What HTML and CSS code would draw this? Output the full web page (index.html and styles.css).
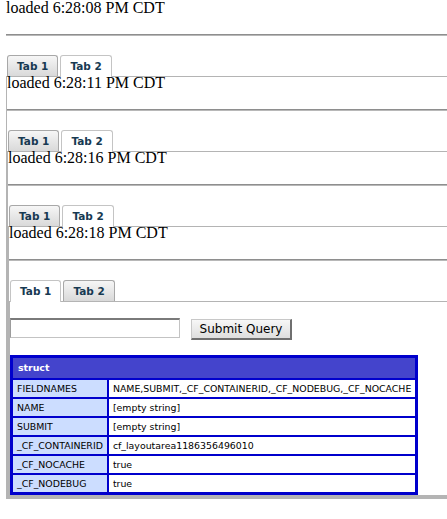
FILE: index.html
```html
<!DOCTYPE html>
<html>
<head>
<meta charset="utf-8">
<link rel="stylesheet" href="styles.css">
</head>
<body>
<div class="level top">
  <div class="loaded">loaded 6:28:08 PM CDT</div>
  <hr>
  <div class="tabs"><span class="tab">Tab 1</span><span class="tab active">Tab 2</span></div>
  <div class="panel">
    <div class="loaded">loaded 6:28:11 PM CDT</div>
    <hr>
    <div class="tabs"><span class="tab">Tab 1</span><span class="tab active">Tab 2</span></div>
    <div class="panel">
      <div class="loaded">loaded 6:28:16 PM CDT</div>
      <hr>
      <div class="tabs"><span class="tab">Tab 1</span><span class="tab active">Tab 2</span></div>
      <div class="panel">
        <div class="loaded">loaded 6:28:18 PM CDT</div>
        <hr>
        <div class="tabs"><span class="tab active">Tab 1</span><span class="tab">Tab 2</span></div>
        <div class="panel inner">
          <form class="form">
            <input class="field" type="text" name="name">
            <button class="submit" type="button">Submit Query</button>
          </form>
          <table class="cfdump">
            <tr><th class="head" colspan="2">struct</th></tr>
            <tr><td class="key">FIELDNAMES</td><td class="val">NAME,SUBMIT,_CF_CONTAINERID,_CF_NODEBUG,_CF_NOCACHE</td></tr>
            <tr><td class="key">NAME</td><td class="val">[empty string]</td></tr>
            <tr><td class="key">SUBMIT</td><td class="val">[empty string]</td></tr>
            <tr><td class="key">_CF_CONTAINERID</td><td class="val">cf_layoutarea1186356496010</td></tr>
            <tr><td class="key">_CF_NOCACHE</td><td class="val">true</td></tr>
            <tr><td class="key">_CF_NODEBUG</td><td class="val">true</td></tr>
          </table>
        </div>
      </div>
    </div>
  </div>
</div>
</body>
</html>
```

FILE: styles.css
```css
html, body {
  background: #fff;
}
body {
  margin: 0 0 0 6px;
  font-family: "Liberation Serif", "Times New Roman", serif;
  font-size: 16px;
  line-height: 18px;
  color: #000;
  overflow: hidden;
}
.loaded {
  height: 18px;
  margin-top: -3px;
  white-space: nowrap;
}
.top > .loaded {
  margin-top: -1px;
}
hr {
  margin: 17px 0 19px 0;
  height: 0;
  border: 0;
  border-top: 1px solid #8e8e8e;
  border-bottom: 1px solid #b8b8b8;
}
.tabs {
  display: flex;
  gap: 2px;
  padding-left: 1px;
  height: 21px;
  align-items: flex-start;
}
.tab {
  box-sizing: border-box;
  height: 21px;
  padding: 0 9px;
  border: 1px solid #a8a8a8;
  border-bottom: 0;
  border-radius: 3px 3px 0 0;
  background: linear-gradient(#f6f6f6, #d9d9d9);
  font-family: "DejaVu Sans", Verdana, sans-serif;
  font-weight: bold;
  font-size: 10.5px;
  line-height: 20px;
  color: #173a52;
  position: relative;
  z-index: 1;
}
.tab.active {
  height: 22px;
  background: #fff;
  border-color: #c4c4c4;
}
.panel {
  border-top: 1px solid #b4b4b4;
  border-left: 1px solid #b4b4b4;
  border-bottom: 1px solid #b4b4b4;
}
.inner {
  padding-top: 16px;
}
.form {
  display: flex;
  align-items: flex-start;
  gap: 11px;
  margin: 0;
  height: 21px;
}
.field {
  box-sizing: border-box;
  width: 170px;
  height: 20px;
  margin: 0;
  padding: 0 2px;
  border: 1px solid #c3c3c3;
  border-top: 2px solid #7a7a7a;
  border-left-color: #9c9c9c;
  background: #fff;
}
.submit {
  box-sizing: border-box;
  width: 101px;
  height: 21px;
  margin: 1px 0 0 0;
  padding: 0;
  border: 1px solid #c8c8c8;
  border-right: 2px solid #6f6f6f;
  border-bottom: 2px solid #6f6f6f;
  background: linear-gradient(#f7f7f7, #dedede);
  font-family: "DejaVu Sans", "Lucida Grande", sans-serif;
  font-size: 12px;
  color: #000;
}
.cfdump {
  margin-top: 16px;
  border-collapse: separate;
  border-spacing: 2px;
  border: 1px solid #0000cc;
  background: #0000cc;
  font-family: "DejaVu Sans", Verdana, sans-serif;
  font-size: 9.4px;
  line-height: 11px;
}
.head {
  background: #4444cc;
  color: #fff;
  text-align: left;
  font-weight: bold;
  padding: 4px 5px;
  line-height: 12px;
}
.key {
  background: #ccddff;
  padding: 3px 4px;
  white-space: nowrap;
  color: #000;
}
.val {
  background: #fff;
  padding: 3px 4px;
  white-space: nowrap;
  color: #000;
}
```
